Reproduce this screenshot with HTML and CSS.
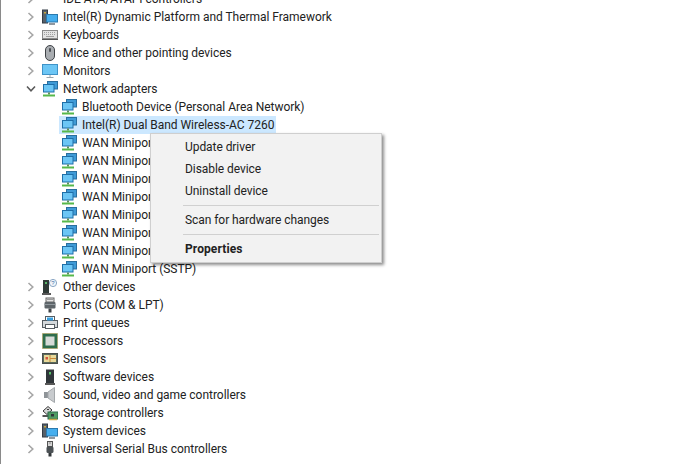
FILE: index.html
```
<!DOCTYPE html>
<html lang="en">
<head>
<meta charset="utf-8">
<title>Device Manager</title>
<link rel="stylesheet" href="styles.css">
</head>
<body>
<svg class="defs" width="0" height="0" aria-hidden="true">
  <defs>
    <symbol id="chev-r" viewBox="0 0 8 10"><path d="M1.500 1 5.800 5 1.500 9" fill="none" stroke="#a6a6a6" stroke-width="1.600"/></symbol>
    <symbol id="chev-d" viewBox="0 0 10 8"><path d="M1 1.500 5 5.800 9 1.500" fill="none" stroke="#5a5a5a" stroke-width="1.600"/></symbol>
    <symbol id="net" viewBox="0 0 16 16">
      <rect x="5.500" y="0.500" width="10" height="7.500" fill="#3f9ad6" stroke="#2a6f9f"/>
      <rect x="1" y="3" width="11.500" height="8.500" fill="#1f6fa8"/>
      <rect x="2" y="4" width="9.500" height="6.500" fill="#6cc6f5"/>
      <rect x="6" y="11.500" width="2" height="2" fill="#5f8f5f"/>
      <path d="M1 14.500h12" stroke="#57b84a" stroke-width="2"/>
    </symbol>
    <symbol id="ide" viewBox="0 0 16 16">
      <rect x="5" y="0" width="8" height="6" fill="#3f7f4f"/>
      <path d="M5 6h8" stroke="#c9a94a" stroke-width="1.500"/>
    </symbol>
    <symbol id="sys" viewBox="0 0 16 16">
      <rect x="0.500" y="1" width="5" height="13" fill="#56606a" stroke="#333b44"/>
      <rect x="2" y="3" width="2" height="1.500" fill="#c5a840"/>
      <rect x="4.500" y="5.500" width="11" height="7.500" fill="#45aeee" stroke="#2b79ad"/>
      <path d="M7 15h6" stroke="#6b7680" stroke-width="1.500"/>
    </symbol>
    <symbol id="kbd" viewBox="0 0 16 16">
      <rect x="0.500" y="3.500" width="15" height="8" fill="#e3e3e3" stroke="#8a8a8a"/>
      <path d="M2 5.500h12M2 7.500h12" stroke="#a0a0a0" stroke-dasharray="1 1"/>
      <path d="M4 9.500h8" stroke="#a0a0a0"/>
      <path d="M0 12.500h16" stroke="#555"/>
    </symbol>
    <symbol id="mouse" viewBox="0 0 16 16">
      <rect x="3.500" y="0.500" width="9" height="15" rx="4.500" fill="#a9adb1" stroke="#3f4347"/>
      <rect x="7" y="3" width="2" height="4" rx="1" fill="#4e5257"/>
    </symbol>
    <symbol id="mon" viewBox="0 0 16 16">
      <rect x="0.500" y="1.500" width="15" height="10" fill="#6cc6f5" stroke="#3f93c8"/>
      <path d="M8 12v2M4.500 14.500h7" stroke="#9aa4ab"/>
    </symbol>
    <symbol id="other" viewBox="0 0 16 16">
      <rect x="1" y="1" width="6" height="13" fill="#2f3a36"/>
      <rect x="3" y="3" width="2" height="2" fill="#58b368"/>
      <path d="M0 15h9" stroke="#222" stroke-width="1.500"/>
      <circle cx="11" cy="4" r="3.600" fill="#f3f7fb" stroke="#8aa6c4"/>
      <text class="q" x="11" y="6.200" text-anchor="middle">?</text>
    </symbol>
    <symbol id="port" viewBox="0 0 16 16">
      <rect x="4" y="1" width="8" height="4" fill="#e4e4e4" stroke="#666"/>
      <path d="M5.500 2.500h1M7.500 2.500h1M9.500 2.500h1" stroke="#555"/>
      <rect x="2.500" y="5" width="11" height="6.500" rx="1" fill="#5d6469"/>
      <path d="M2.500 7.500h11" stroke="#8f979c"/>
      <rect x="6.500" y="11.500" width="3" height="4" fill="#3e4347"/>
    </symbol>
    <symbol id="print" viewBox="0 0 16 16">
      <rect x="0.500" y="5.500" width="15" height="7" fill="#d5d9dc" stroke="#565d63"/>
      <rect x="3.500" y="1.500" width="9" height="4" fill="#fff" stroke="#565d63"/>
      <rect x="5" y="2.500" width="6" height="3" fill="#39a0e0"/>
      <rect x="3.500" y="9.500" width="9" height="4" fill="#fff" stroke="#565d63"/>
    </symbol>
    <symbol id="cpu" viewBox="0 0 16 16">
      <rect x="0.500" y="0.500" width="15" height="15" fill="#2f6d4c" stroke="#b59b4a" stroke-dasharray="1 1"/>
      <rect x="2" y="2" width="12" height="12" fill="#2f6d4c"/>
      <rect x="3.500" y="3.500" width="9" height="9" fill="#d6dbd8"/>
    </symbol>
    <symbol id="sensor" viewBox="0 0 16 16">
      <rect x="0.500" y="2.500" width="15" height="10" fill="#5a6a5c" stroke="#4a4f4c"/>
      <rect x="2" y="4" width="12" height="7" fill="#e8d99a"/>
      <path d="M8 4v7M8 7.500h6" stroke="#c98a3a"/>
      <rect x="3.500" y="6" width="2.500" height="2.500" fill="#d2563f"/>
    </symbol>
    <symbol id="soft" viewBox="0 0 16 16">
      <rect x="4" y="0.500" width="8" height="13.500" fill="#30363a"/>
      <rect x="7" y="3" width="2" height="2.500" fill="#58c06a"/>
      <path d="M3 15h10" stroke="#222" stroke-width="1.500"/>
    </symbol>
    <symbol id="sound" viewBox="0 0 16 16">
      <rect x="2" y="5" width="4" height="6" fill="#8f9498"/>
      <path d="M6 5 12.500 0.500V15.500L6 11Z" fill="#c8cbce" stroke="#a3a7aa"/>
    </symbol>
    <symbol id="storage" viewBox="0 0 16 16">
      <path d="M1 6 6 1.500l4 3.500-5 4.500Z" fill="#d8d8d8" stroke="#3d3d3d"/>
      <path d="M5 4.500h2" stroke="#3d3d3d"/>
      <rect x="0.500" y="10" width="6" height="2" fill="#555"/>
      <rect x="6" y="7" width="10" height="7" fill="#4f9b63" stroke="#2f6d4c"/>
      <path d="M7 14.500h8" stroke="#c9a94a" stroke-width="1.500"/>
      <rect x="9" y="9" width="3" height="2.500" fill="#30363a"/>
    </symbol>
    <symbol id="usb" viewBox="0 0 16 16">
      <rect x="5.500" y="0.500" width="5" height="5" fill="#d5d5d5" stroke="#555"/>
      <path d="M7 2h.5M8.500 2H9" stroke="#444"/>
      <rect x="4.500" y="5.500" width="7" height="6.500" rx="1.500" fill="#4c5155"/>
      <rect x="6.500" y="12" width="3" height="3.500" fill="#33373a"/>
    </symbol>
  </defs>
</svg>

<main class="tree">
  <div class="row"><svg class="chev"><use href="#chev-r"/></svg><svg class="icon"><use href="#ide"/></svg><span class="label">IDE ATA/ATAPI controllers</span></div>
  <div class="row"><svg class="chev"><use href="#chev-r"/></svg><svg class="icon"><use href="#sys"/></svg><span class="label">Intel(R) Dynamic Platform and Thermal Framework</span></div>
  <div class="row"><svg class="chev"><use href="#chev-r"/></svg><svg class="icon"><use href="#kbd"/></svg><span class="label">Keyboards</span></div>
  <div class="row"><svg class="chev"><use href="#chev-r"/></svg><svg class="icon"><use href="#mouse"/></svg><span class="label">Mice and other pointing devices</span></div>
  <div class="row"><svg class="chev"><use href="#chev-r"/></svg><svg class="icon"><use href="#mon"/></svg><span class="label">Monitors</span></div>
  <div class="row"><svg class="chev chev-open"><use href="#chev-d"/></svg><svg class="icon"><use href="#net"/></svg><span class="label">Network adapters</span></div>
  <div class="row child"><div class="item"><svg class="icon"><use href="#net"/></svg><span class="label">Bluetooth Device (Personal Area Network)</span></div></div>
  <div class="row child"><div class="item selected"><svg class="icon"><use href="#net"/></svg><span class="label">Intel(R) Dual Band Wireless-AC 7260</span></div></div>
  <div class="row child"><div class="item"><svg class="icon"><use href="#net"/></svg><span class="label">WAN Miniport (IKEv2)</span></div></div>
  <div class="row child"><div class="item"><svg class="icon"><use href="#net"/></svg><span class="label">WAN Miniport (IP)</span></div></div>
  <div class="row child"><div class="item"><svg class="icon"><use href="#net"/></svg><span class="label">WAN Miniport (IPv6)</span></div></div>
  <div class="row child"><div class="item"><svg class="icon"><use href="#net"/></svg><span class="label">WAN Miniport (L2TP)</span></div></div>
  <div class="row child"><div class="item"><svg class="icon"><use href="#net"/></svg><span class="label">WAN Miniport (Network Monitor)</span></div></div>
  <div class="row child"><div class="item"><svg class="icon"><use href="#net"/></svg><span class="label">WAN Miniport (PPPOE)</span></div></div>
  <div class="row child"><div class="item"><svg class="icon"><use href="#net"/></svg><span class="label">WAN Miniport (PPTP)</span></div></div>
  <div class="row child"><div class="item"><svg class="icon"><use href="#net"/></svg><span class="label">WAN Miniport (SSTP)</span></div></div>
  <div class="row"><svg class="chev"><use href="#chev-r"/></svg><svg class="icon"><use href="#other"/></svg><span class="label">Other devices</span></div>
  <div class="row"><svg class="chev"><use href="#chev-r"/></svg><svg class="icon"><use href="#port"/></svg><span class="label">Ports (COM &amp; LPT)</span></div>
  <div class="row"><svg class="chev"><use href="#chev-r"/></svg><svg class="icon"><use href="#print"/></svg><span class="label">Print queues</span></div>
  <div class="row"><svg class="chev"><use href="#chev-r"/></svg><svg class="icon"><use href="#cpu"/></svg><span class="label">Processors</span></div>
  <div class="row"><svg class="chev"><use href="#chev-r"/></svg><svg class="icon"><use href="#sensor"/></svg><span class="label">Sensors</span></div>
  <div class="row"><svg class="chev"><use href="#chev-r"/></svg><svg class="icon"><use href="#soft"/></svg><span class="label">Software devices</span></div>
  <div class="row"><svg class="chev"><use href="#chev-r"/></svg><svg class="icon"><use href="#sound"/></svg><span class="label">Sound, video and game controllers</span></div>
  <div class="row"><svg class="chev"><use href="#chev-r"/></svg><svg class="icon"><use href="#storage"/></svg><span class="label">Storage controllers</span></div>
  <div class="row"><svg class="chev"><use href="#chev-r"/></svg><svg class="icon"><use href="#sys"/></svg><span class="label">System devices</span></div>
  <div class="row"><svg class="chev"><use href="#chev-r"/></svg><svg class="icon"><use href="#usb"/></svg><span class="label">Universal Serial Bus controllers</span></div>
</main>

<nav class="menu">
  <div class="menu-item">Update driver</div>
  <div class="menu-item">Disable device</div>
  <div class="menu-item">Uninstall device</div>
  <div class="menu-sep"></div>
  <div class="menu-item">Scan for hardware changes</div>
  <div class="menu-sep"></div>
  <div class="menu-item menu-bold">Properties</div>
</nav>
</body>
</html>
```

FILE: styles.css
```
html, body {
  margin: 0;
  height: 100%;
  background: #fff;
  overflow: hidden;
}
body {
  position: relative;
  font-family: Roboto, "Noto Sans", sans-serif;
  font-size: 12px;
  letter-spacing: -0.03px;
  color: #222;
  border-left: 1px solid #8a8a8a;
  box-sizing: border-box;
}
.defs { position: absolute; }
.q { font-size: 6px; fill: #3f6fa8; font-family: "Liberation Sans", sans-serif; }
.tree { margin-top: -10px; }
.row {
  display: flex;
  align-items: center;
  height: 18px;
  padding-left: 26px;
  white-space: nowrap;
}
.chev { width: 8px; height: 10px; margin-right: 7px; flex: none; }
.chev-open { width: 10px; height: 8px; margin-left: -1px; margin-right: 6px; }
.icon { width: 16px; height: 16px; flex: none; }
.label { margin-left: 5px; }
.child { padding-left: 58px; }
.item {
  display: flex;
  align-items: center;
  height: 18px;
  padding: 0 2px 0 2px;
}
.selected { background: #cce8ff; }
.menu {
  position: absolute;
  left: 149px;
  top: 133px;
  width: 232px;
  height: 130px;
  box-sizing: border-box;
  padding: 2px 2px;
  background: #f2f2f2;
  border: 1px solid #cfcfcf;
  box-shadow: 2px 2px 3px rgba(0, 0, 0, 0.45);
}
.menu-item {
  height: 22px;
  line-height: 23px;
  padding-left: 32px;
  letter-spacing: -0.06px;
}
.menu-sep {
  height: 1px;
  margin: 3px 0 3px 30px;
  background: #d0d0d0;
}
.menu-bold { font-weight: 700; letter-spacing: 0.1px; }
```
